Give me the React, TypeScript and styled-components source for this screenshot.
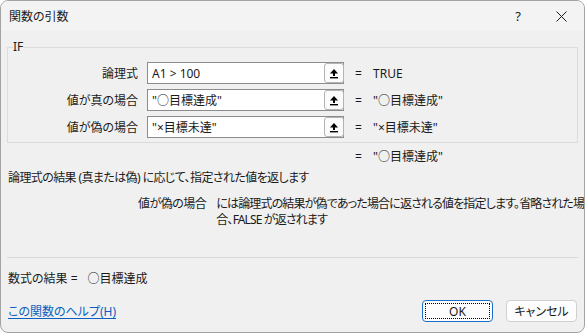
import React from 'react';
import styled, { createGlobalStyle } from 'styled-components';

const GlobalStyle = createGlobalStyle`
  html, body {
    margin: 0;
    padding: 0;
    background: #ffffff;
  }
  body {
    font-family: "Noto Sans", "Noto Sans CJK JP", sans-serif;
    font-size: 12px;
    color: #1a1a1a;
    font-feature-settings: "palt";
  }
`;

type Arg = {
  label: string;
  input: string;
  value: string;
};

const args: Arg[] = [
  { label: '論理式', input: 'A1 > 100', value: 'TRUE' },
  { label: '値が真の場合', input: '"○目標達成"', value: '"○目標達成"' },
  { label: '値が偽の場合', input: '"×目標未達"', value: '"×目標未達"' },
];

const RefIcon = () => (
  <svg width="10" height="11" viewBox="0 0 10 11">
    <polygon points="5,1 1,5.5 9,5.5" fill="#000" />
    <rect x="4" y="5" width="2" height="3" fill="#000" />
    <rect x="1" y="9" width="8" height="1.4" fill="#000" />
  </svg>
);

const CloseIcon = () => (
  <svg width="11" height="11" viewBox="0 0 11 11">
    <path d="M0.5 0.5 L10.5 10.5 M10.5 0.5 L0.5 10.5" stroke="#1a1a1a" strokeWidth="1" />
  </svg>
);

const App: React.FC = () => {
  return (
    <>
      <GlobalStyle />
      <Window>
        <TitleBar>
          <Title>関数の引数</Title>
          <TitleButtons>
            <HelpMark>?</HelpMark>
            <CloseBtn>
              <CloseIcon />
            </CloseBtn>
          </TitleButtons>
        </TitleBar>

        <Body>
          <Group>
            <Legend>IF</Legend>
            {args.map((a) => (
              <ArgRow key={a.label}>
                <ArgLabel>{a.label}</ArgLabel>
                <Field>
                  <FieldText>{a.input}</FieldText>
                  <RefButton>
                    <RefIcon />
                  </RefButton>
                </Field>
                <Eq>=</Eq>
                <ArgValue>{a.value}</ArgValue>
              </ArgRow>
            ))}
          </Group>

          <ArgRow $plain>
            <span />
            <span />
            <Eq>=</Eq>
            <ArgValue>"○目標達成"</ArgValue>
          </ArgRow>

          <Summary>論理式の結果 (真または偽) に応じて、指定された値を返します</Summary>

          <ArgHelp>
            <ArgHelpLabel>値が偽の場合</ArgHelpLabel>
            <ArgHelpText>
              には論理式の結果が偽であった場合に返される値を指定します。省略された場
              <br />
              合、FALSE が返されます
            </ArgHelpText>
          </ArgHelp>

          <Separator />

          <FormulaResult>
            数式の結果 =<ResultValue>○目標達成</ResultValue>
          </FormulaResult>

          <Footer>
            <HelpLink href="#">この関数のヘルプ(H)</HelpLink>
            <Buttons>
              <DialogButton $primary>
                <FocusRing>OK</FocusRing>
              </DialogButton>
              <DialogButton>キャンセル</DialogButton>
            </Buttons>
          </Footer>
        </Body>
      </Window>
    </>
  );
};

export const Window = styled.div`
  width: 585px;
  height: 333px;
  box-sizing: border-box;
  border: 1px solid #a3a3a3;
  border-radius: 8px;
  overflow: hidden;
  background: #f0f0f0;
  display: flex;
  flex-direction: column;
`;

export const TitleBar = styled.div`
  height: 30px;
  background: #f3f3f3;
  display: flex;
  align-items: center;
  justify-content: space-between;
  padding-left: 8px;
  flex-shrink: 0;
`;

export const Title = styled.div`
  font-size: 12px;
  padding-bottom: 1px;
`;

export const TitleButtons = styled.div`
  display: flex;
  align-items: center;
  height: 100%;
`;

export const HelpMark = styled.div`
  width: 46px;
  text-align: center;
  font-size: 13px;
  font-family: "Noto Sans", sans-serif;
  margin-right: -3px;
`;

export const CloseBtn = styled.div`
  width: 46px;
  display: flex;
  justify-content: center;
  align-items: center;
`;

export const Body = styled.div`
  padding: 0 6px 0 6px;
  display: flex;
  flex-direction: column;
`;

export const Group = styled.fieldset`
  margin: 8px 0 0;
  padding: 0 0 4px;
  border: 1px solid #dcdcdc;
  min-width: 0;
  display: flex;
  flex-direction: column;
  gap: 5px;
`;

export const Legend = styled.legend`
  padding: 0;
  margin-left: 5px;
  line-height: 16px;
  font-size: 12px;
  margin-bottom: 7px;
`;

export const ArgRow = styled.div<{ $plain?: boolean }>`
  display: grid;
  grid-template-columns: 130px 197px 7px auto;
  column-gap: 9px;
  align-items: center;
  height: ${(p) => (p.$plain ? '16px' : '22px')};
  margin-top: ${(p) => (p.$plain ? '4px' : '0')};
  padding-left: ${(p) => (p.$plain ? '1px' : '0')};
`;

export const ArgLabel = styled.div`
  text-align: right;
`;

export const Field = styled.div`
  height: 22px;
  box-sizing: border-box;
  border: 1px solid #8c8c8c;
  background: #ffffff;
  display: flex;
  align-items: center;
  justify-content: space-between;
  padding-left: 4px;
`;

export const FieldText = styled.span`
  font-size: 12px;
  white-space: nowrap;
`;

export const RefButton = styled.div`
  width: 20px;
  height: 20px;
  box-sizing: border-box;
  border: 1px solid #b4b4b4;
  border-radius: 3px;
  background: #fbfbfb;
  margin-right: -1px;
  display: flex;
  align-items: center;
  justify-content: center;
`;

export const Eq = styled.span`
  text-align: center;
  margin-left: 2px;
`;

export const ArgValue = styled.span`
  white-space: nowrap;
  margin-left: 4px;
`;

export const Summary = styled.div`
  margin-top: 7px;
  line-height: 16px;
  padding-left: 1px;
  letter-spacing: -0.6px;
`;

export const ArgHelp = styled.div`
  margin-top: 10px;
  margin-right: -6px;
  display: flex;
  gap: 10px;
  padding-left: 131px;
  line-height: 16px;
`;

export const ArgHelpLabel = styled.div`
  white-space: nowrap;
  letter-spacing: -0.5px;
`;

export const ArgHelpText = styled.div`
  white-space: nowrap;
  letter-spacing: -0.85px;
`;

export const Separator = styled.div`
  margin-top: 29px;
  border-top: 1px solid #d9d9d9;
`;

export const FormulaResult = styled.div`
  margin-top: 13px;
  line-height: 16px;
  padding-left: 1px;
  display: flex;
`;

export const ResultValue = styled.span`
  margin-left: 10px;
`;

export const Footer = styled.div`
  margin-top: 13px;
  display: flex;
  align-items: center;
  justify-content: space-between;
  padding-left: 1px;
`;

export const HelpLink = styled.a`
  color: #0a5fc0;
  text-decoration: underline;
  text-underline-offset: 2px;
`;

export const Buttons = styled.div`
  display: flex;
  gap: 13px;
  margin-right: 1px;
`;

export const DialogButton = styled.div<{ $primary?: boolean }>`
  width: 71px;
  height: 22px;
  box-sizing: border-box;
  border: 1px solid ${(p) => (p.$primary ? '#1a6fc9' : '#d0d0d0')};
  border-radius: 4px;
  background: #fdfdfd;
  display: flex;
  align-items: center;
  justify-content: center;
  padding: 2px;
  font-size: 12px;
`;

export const FocusRing = styled.div`
  flex: 1;
  align-self: stretch;
  border: 1px dotted #000;
  display: flex;
  align-items: center;
  justify-content: center;
`;

export default App;
